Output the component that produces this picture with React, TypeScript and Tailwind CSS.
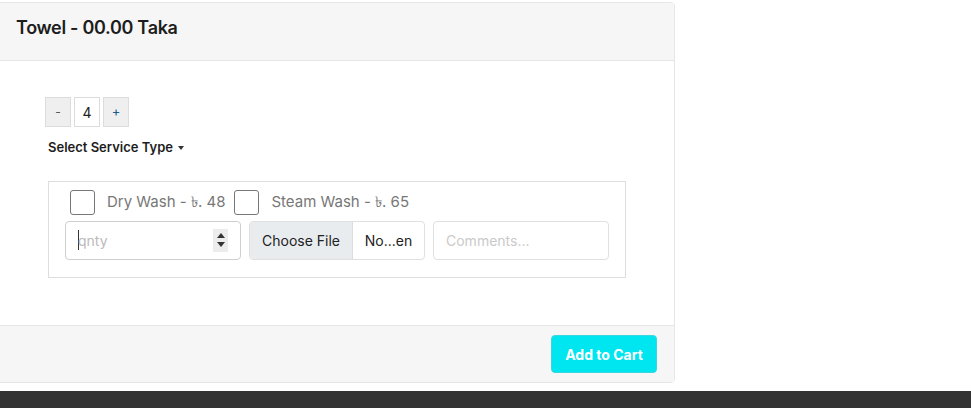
import { useState } from 'react'

export default function App() {
  const [qty, setQty] = useState(4)

  return (
    <div
      className="w-[971px] h-[408px] bg-white overflow-hidden flex flex-col"
      style={{ fontFamily: 'Inter, "Noto Sans", sans-serif' }}
    >
      <div className="pt-[2px] ml-[-1px] w-[676px]">
        <div className="border border-[#e6e6e6] rounded-r-[4px] bg-white">
          <div className="h-[58px] bg-[#f6f6f6] border-b border-[#e6e6e6] px-[16px] pt-[11px]">
            <h4 className="text-[18px] font-semibold text-[#1d1d1d] tracking-[-0.3px]">
              Towel - 00.00 Taka
            </h4>
          </div>

          <div className="h-[264px] pl-[45px] pt-[36px]">
            <div className="flex items-center gap-[3px]">
              <button
                onClick={() => setQty(Math.max(0, qty - 1))}
                className="w-[26px] h-[30px] bg-[#efefef] border border-[#dcdcdc] text-[12px] text-[#555] flex items-center justify-center"
              >
                -
              </button>
              <div className="w-[26px] h-[30px] bg-white border border-[#dcdcdc] text-[14px] text-[#222] flex items-center justify-center">
                {qty}
              </div>
              <button
                onClick={() => setQty(qty + 1)}
                className="w-[26px] h-[30px] bg-[#efefef] border border-[#dcdcdc] text-[13px] text-[#1a5a8a] flex items-center justify-center"
              >
                +
              </button>
            </div>

            <div className="mt-[11px] ml-[3px] flex items-center gap-[5px] text-[13px] font-semibold text-[#1d1d1d]">
              Select Service Type
              <span className="w-0 h-0 border-l-[3px] border-r-[3px] border-t-[4px] border-l-transparent border-r-transparent border-t-[#333] mt-[1px]" />
            </div>

            <div className="mt-[23px] ml-[3px] w-[578px] h-[97px] border border-[#dedede] pl-[16px] pt-[8px]">
              <div className="flex items-center pl-[5px] text-[15px] text-[#777]">
                <span className="w-[25px] h-[25px] border border-[#777] rounded-[3px] bg-white" />
                <span className="ml-[12px]">Dry Wash - ৳. 48</span>
                <span className="ml-[9px] w-[25px] h-[25px] border border-[#777] rounded-[3px] bg-white" />
                <span className="ml-[12px]">Steam Wash - ৳. 65</span>
              </div>

              <div className="flex items-center gap-[8px] mt-[6px]">
                <div className="w-[176px] h-[39px] border border-[#cfcfcf] rounded-[4px] flex items-center pl-[12px] pr-[12px]">
                  <span className="w-px h-[20px] bg-[#333]" />
                  <span className="text-[14px] text-[#bbb] ml-[-1px] flex-1">qnty</span>
                  <span className="w-[15px] h-[23px] bg-[#ececec] flex flex-col items-center justify-center gap-[4px]">
                    <span className="w-0 h-0 border-l-[4px] border-r-[4px] border-b-[5px] border-l-transparent border-r-transparent border-b-[#333]" />
                    <span className="w-0 h-0 border-l-[4px] border-r-[4px] border-t-[5px] border-l-transparent border-r-transparent border-t-[#333]" />
                  </span>
                </div>

                <div className="w-[176px] h-[39px] border border-[#e0e0e0] rounded-[4px] flex overflow-hidden text-[14px] text-[#222]">
                  <span className="w-[103px] bg-[#e9ecef] border-r border-[#dcdcdc] flex items-center justify-center">
                    Choose File
                  </span>
                  <span className="flex-1 flex items-center justify-center">No...en</span>
                </div>

                <div className="w-[176px] h-[39px] border border-[#e0e0e0] rounded-[4px] flex items-center pl-[12px] text-[14px] text-[#cacaca]">
                  Comments...
                </div>
              </div>
            </div>
          </div>

          <div className="h-[57px] bg-[#f6f6f6] border-t border-[#e6e6e6] flex items-center justify-end pr-[17px]">
            <button className="w-[106px] h-[38px] bg-[#00e6f0] border border-[#3ad7df] rounded-[4px] text-white text-[14px] font-bold">
              Add to Cart
            </button>
          </div>
        </div>
      </div>

      <div className="mt-[8px] flex-1 bg-[#333333]" />
    </div>
  )
}
